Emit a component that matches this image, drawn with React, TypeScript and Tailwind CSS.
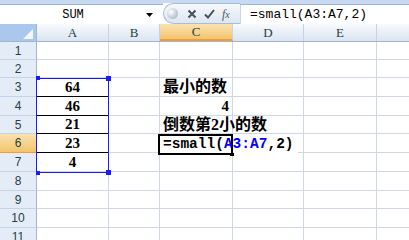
import React from "react";

const cols = [
  { key: "A", w: "w-[72px]" },
  { key: "B", w: "w-[51px]" },
  { key: "C", w: "w-[73px]" },
  { key: "D", w: "w-[71px]" },
  { key: "E", w: "w-[73px]" },
];

const rows = [
  { n: 1, h: "h-[18px]" },
  { n: 2, h: "h-[18px]" },
  { n: 3, h: "h-[19px]" },
  { n: 4, h: "h-[19px]" },
  { n: 5, h: "h-[18px]" },
  { n: 6, h: "h-[19px]" },
  { n: 7, h: "h-[19px]" },
  { n: 8, h: "h-[19px]" },
  { n: 9, h: "h-[18px]" },
  { n: 10, h: "h-[19px]" },
  { n: 11, h: "h-[18px]" },
];

const nums: Record<number, string> = { 3: "64", 4: "46", 5: "21", 6: "23", 7: "4" };

const mono = { fontFamily: "'Liberation Mono', monospace" };
const serif = { fontFamily: "'Liberation Serif', serif" };
const cjk = { fontFamily: "'Liberation Serif', 'Noto Sans CJK SC', sans-serif" };

function Cell({ row, col, w }: { row: number; col: string; w: string }) {
  const inRange = col === "A" && row >= 3 && row <= 6;
  const border = inRange ? "border-b-black" : "border-b-[#d0d7e5]";
  let content: React.ReactNode = null;
  if (col === "A" && nums[row]) {
    content = (
      <div className="flex h-full items-center justify-center text-[15px] font-bold text-black" style={serif}>
        {nums[row]}
      </div>
    );
  }
  if (col === "C" && row === 3) {
    content = (
      <div className="flex h-full items-center whitespace-nowrap pl-[3px] text-[16px] font-bold text-black" style={cjk}>
        最小的数
      </div>
    );
  }
  if (col === "C" && row === 4) {
    content = (
      <div className="flex h-full items-center justify-end pr-[3px] text-[15px] font-bold text-black" style={serif}>
        4
      </div>
    );
  }
  if (col === "C" && row === 5) {
    content = (
      <div className="relative z-10 flex h-full items-center whitespace-nowrap pl-[3px] text-[16px] font-bold text-black" style={cjk}>
        倒数第2小的数
      </div>
    );
  }
  return (
    <div className={`${w} shrink-0 border-b border-r border-r-[#d0d7e5] ${border}`}>{content}</div>
  );
}

export default function App() {
  return (
    <div className="flex h-[240px] w-[409px] flex-col overflow-hidden bg-white">
      {/* formula bar */}
      <div className="flex h-[24px]">
        <div className="flex w-[163px] flex-col">
          <div className="h-[5px] border-b border-[#98b4dc] bg-[#c7daf1]" />
          <div className="flex flex-1 items-center">
            <span className="w-[146px] text-center text-[12px] text-black" style={mono}>
              SUM
            </span>
            <svg width="7" height="4" viewBox="0 0 7 4">
              <path d="M0 0H7L3.5 4Z" fill="#000" />
            </svg>
          </div>
        </div>
        <div className="flex w-[77px] flex-col">
          <div className="h-[3px] bg-[#c7daf1]" />
          <div className="flex flex-1 items-center gap-[7px] rounded-l-full border border-r-0 border-[#a5bcdb] bg-gradient-to-b from-[#f6f9fc] to-[#dde6f2] pl-[3px]">
            <div className="h-[11px] w-[11px] rounded-full bg-[radial-gradient(circle_at_35%_35%,#ffffff,#b8c0cc_70%,#98a2b0)]" />
            <svg width="10" height="10" viewBox="0 0 10 10" className="ml-[2px]">
              <path d="M1.5 1.5L8.5 8.5M8.5 1.5L1.5 8.5" stroke="#4a4f57" strokeWidth="2" />
            </svg>
            <svg width="11" height="10" viewBox="0 0 11 10">
              <path d="M1 5.5L4 8.5L10 1" stroke="#4a4f57" strokeWidth="2" fill="none" />
            </svg>
            <span className="text-[12px] italic text-[#4b5668]" style={serif}>
              f<span className="text-[10px]">x</span>
            </span>
          </div>
        </div>
        <div className="flex flex-1 flex-col">
          <div className="h-[5px] border-b border-[#98b4dc] bg-[#c7daf1]" />
          <div className="flex flex-1 items-center border-l border-[#c9d5e6] pl-[9px]">
            <span className="text-[13px] text-black" style={mono}>
              =small(A3:A7,2)
            </span>
          </div>
        </div>
      </div>
      <div className="h-[2px] bg-[#a4bfe3]" />
      <div className="h-[3px] bg-[#e6edf7]" />

      {/* grid */}
      <div className="relative flex-1">
        <div className="flex h-[18px] border-b border-[#9eb6ce]">
          <div className="relative w-[37px] shrink-0 border-r border-[#9eb6ce] bg-[#acc7ed]">
            <svg width="10" height="10" viewBox="0 0 10 10" className="absolute bottom-[2px] right-[3px]">
              <path d="M10 0V10H0Z" fill="#f3f6fb" />
            </svg>
          </div>
          {cols.map((c) => (
            <div
              key={c.key}
              className={`${c.w} flex shrink-0 items-center justify-center border-r border-[#c5d3e6] text-[13px] ${
                c.key === "C"
                  ? "border-b-2 border-b-[#f29b3c] bg-gradient-to-b from-[#fae2b0] to-[#f3c56a] text-[#27413e]"
                  : "bg-gradient-to-b from-[#f8fafd] to-[#dbe4f1] text-[#27413e]"
              }`}
              style={serif}
            >
              {c.key}
            </div>
          ))}
          <div className="flex-1 bg-gradient-to-b from-[#f8fafd] to-[#dbe4f1]" />
        </div>

        {rows.map((r) => (
          <div key={r.n} className={`flex ${r.h}`}>
            <div
              className={`flex w-[37px] shrink-0 items-center justify-center border-b border-r text-[12px] ${
                r.n === 6
                  ? "border-[#f29b3c] bg-gradient-to-b from-[#fae2b0] to-[#f3c56a]"
                  : "border-b-[#c5d3e6] border-r-[#9eb6ce] bg-[#e4ecf7]"
              } text-[#27413e]`}
              style={{ fontFamily: "'Liberation Sans', sans-serif" }}
            >
              {r.n}
            </div>
            {cols.map((c) => (
              <Cell key={c.key} row={r.n} col={c.key} w={c.w} />
            ))}
            <div className="flex-1 border-b border-[#d0d7e5]" />
          </div>
        ))}

        {/* selected range A3:A7 */}
        <div className="pointer-events-none absolute left-[36px] top-[54px] h-[95px] w-[73px] border border-[#1a1aff]">
          <div className="absolute -left-[1px] -top-[3px] h-[4px] w-[4px] bg-[#1a1aff]" />
          <div className="absolute -right-[3px] -top-[3px] h-[5px] w-[5px] bg-[#1a1aff]" />
          <div className="absolute -bottom-[3px] -left-[1px] h-[4px] w-[4px] bg-[#1a1aff]" />
          <div className="absolute -bottom-[3px] -right-[3px] h-[5px] w-[5px] bg-[#1a1aff]" />
        </div>

        {/* editing cell C6 */}
        <div className="absolute left-[158px] top-[110px] flex h-[21px] w-[140px] items-center bg-white">
          <div className="absolute left-0 top-0 h-full w-[75px] border-2 border-black" />
          <span className="relative whitespace-nowrap pl-[5px] text-[14.5px] font-bold text-black" style={mono}>
            =small(<span className="text-[#0000ff]">A3:A7</span>,2)
          </span>
          <div className="absolute left-[72px] top-[19px] h-[3px] w-[4px] bg-black" />
        </div>
      </div>
    </div>
  );
}
